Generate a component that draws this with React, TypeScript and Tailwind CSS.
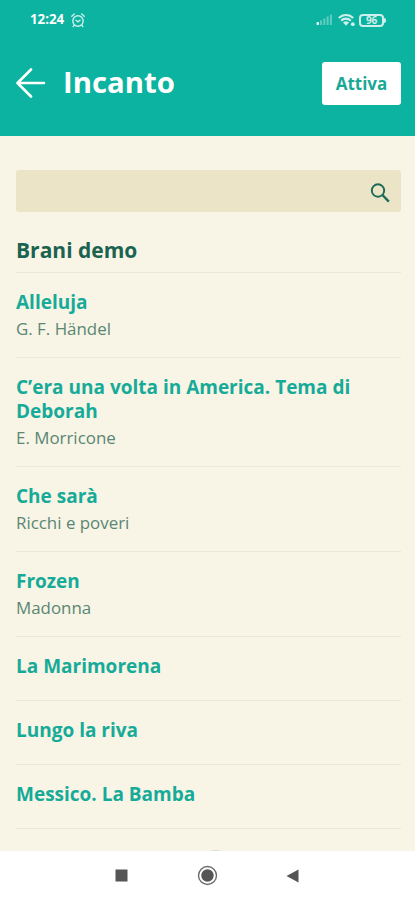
import clsx from "clsx";

type Song = {
  title: string;
  author?: string;
};

const songs: Song[] = [
  { title: "Alleluja", author: "G. F. Händel" },
  { title: "C’era una volta in America. Tema di Deborah", author: "E. Morricone" },
  { title: "Che sarà", author: "Ricchi e poveri" },
  { title: "Frozen", author: "Madonna" },
  { title: "La Marimorena" },
  { title: "Lungo la riva" },
  { title: "Messico. La Bamba" },
];

export default function App() {
  return (
    <div className="flex h-[900px] w-[415px] flex-col overflow-hidden bg-[#f8f4e6] font-['Open_Sans',sans-serif]">
      <header className="h-[136px] shrink-0 bg-[#0bb3a0] text-white">
        <StatusBar />
        <div className="flex items-center pt-[22px] pr-[14px] pl-[15px]">
          <button aria-label="Indietro" className="-mt-[2px]">
            <BackIcon />
          </button>
          <h1 className="-mt-[3px] ml-[17px] text-[29.3px] leading-10 font-bold">
            Incanto
          </h1>
          <button className="ml-auto h-[43px] w-[79px] rounded-[3px] bg-white pt-px text-[17px] font-bold text-[#1aa896]">
            Attiva
          </button>
        </div>
      </header>

      <main className="min-h-0 flex-1 overflow-hidden pt-[34px] pr-[14px] pl-4">
        <div className="flex h-[42px] items-center justify-end rounded-[3px] bg-[#ebe4c6] pt-[3px] pr-[11px]">
          <SearchIcon />
        </div>
        <h2 className="mt-[22px] flex h-[39px] items-start border-b border-[#eae8dc] text-[21px] leading-[33px] font-bold text-[#1b6350]">
          Brani demo
        </h2>
        <ul>
          {songs.map((song) => (
            <SongRow key={song.title} song={song} />
          ))}
        </ul>
        {/* top of the next row, cut off by the navigation bar */}
        <div className="mt-[21px] ml-[195px] h-0.5 w-[9px] rounded-t bg-[#d3e4d8]" />
      </main>

      <NavBar />
    </div>
  );
}

function SongRow({ song }: { song: Song }) {
  return (
    <li
      className={clsx(
        "border-b border-[#eae8dc] pt-[17px]",
        song.author ? "pb-4" : "pb-[22px]",
      )}
    >
      <h3 className="text-[19px] leading-6 font-bold text-[#16ab98]">
        {song.title}
      </h3>
      {song.author && (
        <p className="mt-[3px] text-[16.9px] leading-6 text-[#5a8773]">
          {song.author}
        </p>
      )}
    </li>
  );
}

function StatusBar() {
  return (
    <div className="flex h-10 items-center pr-[29px] pl-[30px]">
      <span className="text-[13.3px] font-bold">12:24</span>
      <AlarmIcon />
      <div className="ml-auto flex items-center">
        <SignalIcon />
        <WifiIcon />
        <Battery level={96} />
      </div>
    </div>
  );
}

function NavBar() {
  return (
    <nav className="flex h-[49px] shrink-0 items-center bg-white pl-[115px] text-[#555]">
      <svg width="13" height="13" viewBox="0 0 13 13">
        <rect x="0.5" y="0.5" width="12" height="12" fill="currentColor" />
      </svg>
      <svg className="ml-[69px]" width="21" height="21" viewBox="0 0 21 21">
        <circle cx="10.5" cy="10.5" r="9" fill="none" stroke="#6b6b6b" strokeWidth="1.4" />
        <circle cx="10.5" cy="10.5" r="6.2" fill="currentColor" />
      </svg>
      <svg className="ml-[68px]" width="13" height="14" viewBox="0 0 13 14">
        <path d="M0.5 7 12.5 0.5v13z" fill="currentColor" />
      </svg>
    </nav>
  );
}

function BackIcon() {
  return (
    <svg width="31" height="30" viewBox="0 0 31 30" fill="none" stroke="currentColor" strokeWidth="2.6" strokeLinecap="round" strokeLinejoin="round">
      <path d="M29 15H2.5M16 1.5 2.5 15 16 28.5" />
    </svg>
  );
}

function SearchIcon() {
  return (
    <svg width="20" height="20" viewBox="0 0 20 20" fill="none" stroke="#1b6b57" strokeWidth="1.9">
      <circle cx="8" cy="7.5" r="6.2" />
      <path d="m12.5 12 6.3 6.6" strokeWidth="2.4" />
    </svg>
  );
}

function AlarmIcon() {
  return (
    <svg className="ml-[7px] opacity-80" width="14" height="15" viewBox="0 0 14 15" fill="none" stroke="currentColor" strokeWidth="1.4" strokeLinecap="round">
      <circle cx="7" cy="8" r="5.2" />
      <path d="M0.8 3.2 3.2 1M13.2 3.2 10.8 1M5 7.2l2 1.6 2-1.6M3.2 12.2l-1 1.4M10.8 12.2l1 1.4" />
    </svg>
  );
}

function SignalIcon() {
  return (
    <svg width="17" height="12" viewBox="0 0 17 12" fill="currentColor">
      <rect x="0.5" y="8" width="2.5" height="3" rx="0.8" opacity="0.9" />
      <g opacity="0.35">
        <rect x="4" y="6.5" width="2" height="4.5" />
        <rect x="7.3" y="4.5" width="2" height="6.5" />
        <rect x="10.6" y="2.5" width="2" height="8.5" />
        <rect x="13.9" y="0.5" width="2" height="10.5" />
      </g>
    </svg>
  );
}

function WifiIcon() {
  return (
    <svg className="ml-[5px] opacity-80" width="18" height="14" viewBox="0 0 18 14" fill="none" stroke="currentColor" strokeWidth="2.1">
      <path d="M0.8 5a10 10 0 0 1 14.4 0M3.2 7.7a6.6 6.6 0 0 1 9.6 0" />
      <path d="M5 9.6a4.4 4.4 0 0 1 6 0l-3 3.2z" fill="currentColor" stroke="none" />
      <circle cx="14.8" cy="11.2" r="1.9" fill="currentColor" stroke="none" />
    </svg>
  );
}

function Battery({ level }: { level: number }) {
  return (
    <div className="ml-[3px] flex items-center opacity-80">
      <span className="flex h-[13px] w-[25px] items-center justify-center rounded-[4px] border-2 border-white text-[10px] leading-none font-bold tracking-tight">
        {level}
      </span>
      <span className="h-[5px] w-[2px] rounded-r-sm bg-white" />
    </div>
  );
}
